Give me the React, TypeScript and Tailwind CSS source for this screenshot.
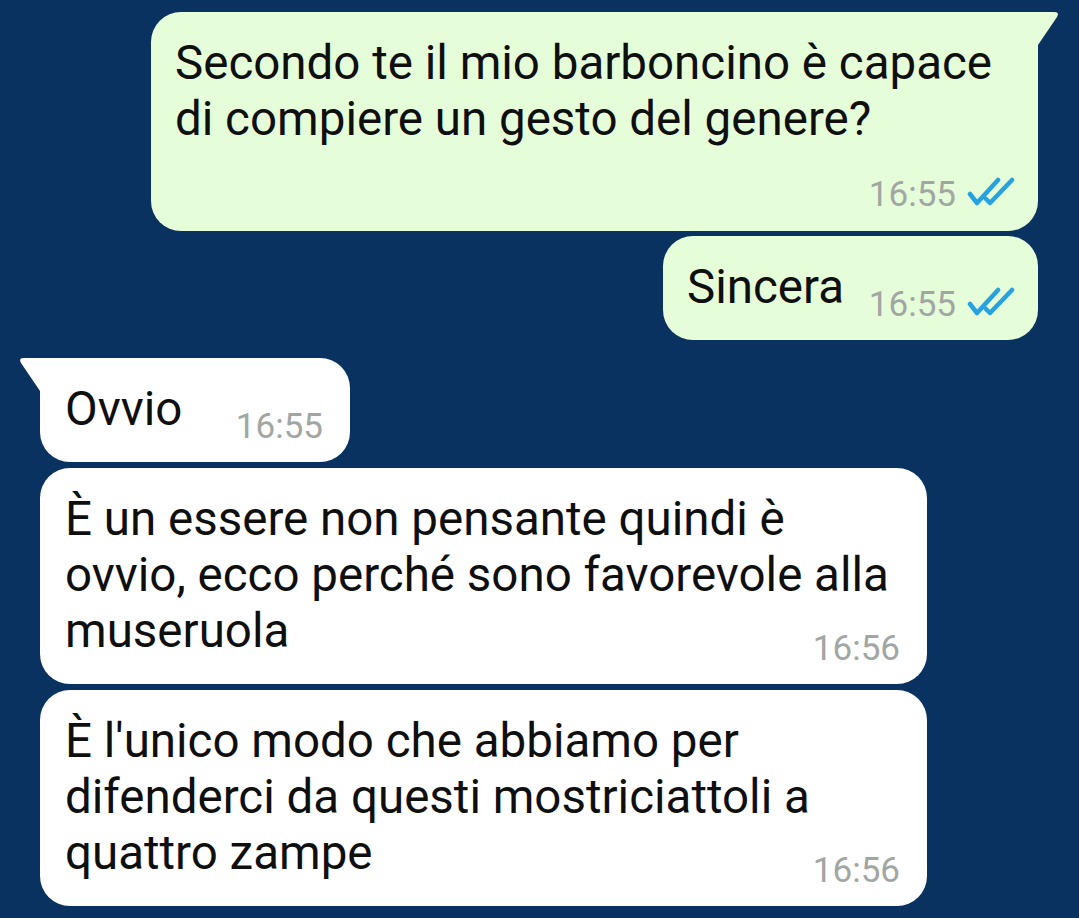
import React from 'react';

interface Message {
  lines: string[];
  time: string;
  outgoing: boolean;
  width: string;
  tail?: boolean;
  timeOwnRow?: boolean;
}

const messages: Message[] = [
  {
    lines: ['Secondo te il mio barboncino è capace', 'di compiere un gesto del genere?'],
    time: '16:55',
    outgoing: true,
    width: 'w-[887px]',
    tail: true,
    timeOwnRow: true,
  },
  { lines: ['Sincera'], time: '16:55', outgoing: true, width: 'w-[375px]' },
  { lines: ['Ovvio'], time: '16:55', outgoing: false, width: 'w-[310px]', tail: true },
  {
    lines: ['È un essere non pensante quindi è', 'ovvio, ecco perché sono favorevole alla', 'museruola'],
    time: '16:56',
    outgoing: false,
    width: 'w-[887px]',
  },
  {
    lines: ["È l'unico modo che abbiamo per", 'difenderci da questi mostriciattoli a', 'quattro zampe'],
    time: '16:56',
    outgoing: false,
    width: 'w-[887px]',
  },
];

const DoubleCheck: React.FC = () => (
  <svg width="48" height="30" viewBox="0 0 48 30" className="mb-[7px] shrink-0">
    <path d="M3 17 L10 26 L31 3" fill="none" stroke="#27a2e0" strokeWidth="4.5" strokeLinecap="round" strokeLinejoin="round" />
    <path d="M19 22 L23 26 L45 3" fill="none" stroke="#27a2e0" strokeWidth="4.5" strokeLinecap="round" strokeLinejoin="round" />
  </svg>
);

const Bubble: React.FC<{ msg: Message }> = ({ msg }) => {
  const bg = msg.outgoing ? 'bg-[#e5fdd9]' : 'bg-white';
  const fill = msg.outgoing ? '#e5fdd9' : '#ffffff';
  let corners = 'rounded-[30px]';
  if (msg.tail) corners = msg.outgoing ? 'rounded-[30px] rounded-tr-none' : 'rounded-[30px] rounded-tl-none';

  return (
    <div
      className={`relative ${msg.width} ${bg} ${corners} pt-[23px] ${msg.timeOwnRow ? 'pb-[16px]' : 'pb-[15px]'} ${
        msg.outgoing ? 'pl-[24px] pr-[23px]' : 'pl-[25px] pr-[27px]'
      }`}
    >
      {msg.tail && msg.outgoing && (
        <svg width="22" height="34" viewBox="0 0 22 34" className="absolute top-0 left-full">
          <path d="M0 0 H16 Q22 0 19 5 L0 33 Z" fill={fill} />
        </svg>
      )}
      {msg.tail && !msg.outgoing && (
        <svg width="22" height="34" viewBox="0 0 22 34" className="absolute top-0 right-full">
          <path d="M22 0 H6 Q0 0 3 5 L22 33 Z" fill={fill} />
        </svg>
      )}
      <div className="text-[47.5px] leading-[56px] text-[#0f0f0f]">
        {msg.lines.map((line, i) => (
          <div key={i} className="whitespace-nowrap">{line}</div>
        ))}
      </div>
      <div className={`flex items-center justify-end gap-[11px] ${msg.timeOwnRow ? 'mt-[28px]' : '-mt-[30px]'}`}>
        <span className="text-[35px] leading-[40px] text-[#a2a6a3]">{msg.time}</span>
        {msg.outgoing && <DoubleCheck />}
      </div>
    </div>
  );
};

export default function App() {
  return (
    <div className="w-[1079px] h-[918px] overflow-hidden bg-[#0a3260] pt-[12px] font-['Roboto',sans-serif]">
      <div className="flex flex-col items-end pr-[41px] gap-[5px]">
        <Bubble msg={messages[0]} />
        <Bubble msg={messages[1]} />
      </div>
      <div className="flex flex-col items-start pl-[40px] gap-[6px] mt-[18px]">
        <Bubble msg={messages[2]} />
        <Bubble msg={messages[3]} />
        <Bubble msg={messages[4]} />
      </div>
    </div>
  );
}
